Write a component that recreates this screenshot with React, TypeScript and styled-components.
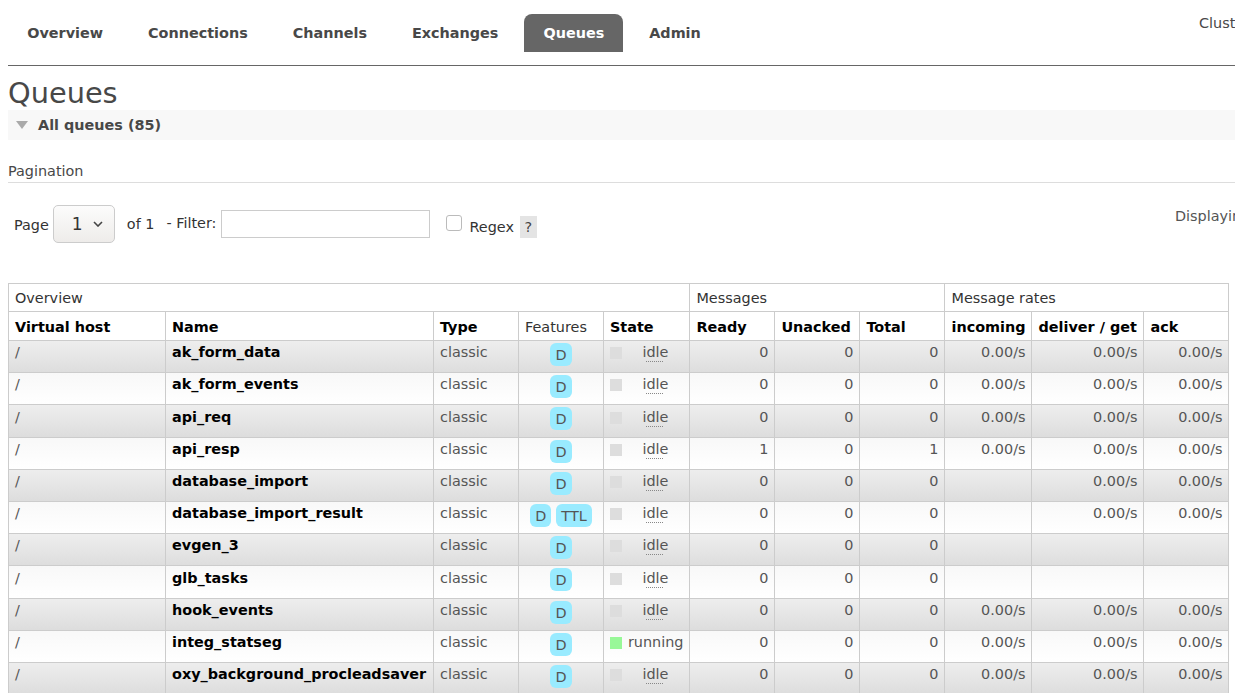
import styled, { createGlobalStyle } from "styled-components";

const GlobalStyle = createGlobalStyle`
    html, body {
        margin: 0;
        padding: 0;
        background: #fff;
        overflow: hidden;
    }
    body {
        font-family: "DejaVu Sans", sans-serif;
        font-size: 14.4px;
        color: #444;
    }
`;

const Page = styled.div`
    width: 1235px;
    height: 693px;
    overflow: hidden;
    padding-left: 8px;
    box-sizing: border-box;
`;

const Header = styled.div`
    display: flex;
    justify-content: space-between;
    height: 65px;
    border-bottom: 1px solid #666;
    margin-bottom: 10px;
    white-space: nowrap;
`;

const Nav = styled.nav`
    display: flex;
    align-items: flex-start;
    padding-top: 14px;
    gap: 6.6px;
`;

const Tab = styled.a<{ $active?: boolean }>`
    display: block;
    height: 38px;
    line-height: 38px;
    padding: 0 19.2px;
    font-weight: bold;
    color: ${(p) => (p.$active ? "#fff" : "#484848")};
    background: ${(p) => (p.$active ? "#666" : "transparent")};
    border-radius: 8px 8px 0 0;
`;

const Cluster = styled.div`
    width: 36px;
    overflow: hidden;
    padding-top: 15px;
    color: #484848;
`;

const Title = styled.h1`
    margin: 0;
    font-size: 28.8px;
    line-height: 34px;
    font-weight: normal;
    color: #484848;
`;

const SectionBar = styled.div`
    display: flex;
    align-items: center;
    gap: 10px;
    height: 30px;
    padding: 0 0 0 8px;
    background: #f8f8f8;
    font-weight: bold;
    color: #484848;
`;

const Triangle = styled.span`
    width: 0;
    height: 0;
    border-left: 6px solid transparent;
    border-right: 6px solid transparent;
    border-top: 8px solid #aaa;
`;

const SubHeading = styled.h3`
    margin: 22px 0 0;
    height: 20px;
    line-height: 19px;
    font-size: 14.4px;
    font-weight: normal;
    color: #484848;
    border-bottom: 1px solid #ddd;
`;

const PagerRow = styled.div`
    display: flex;
    align-items: center;
    justify-content: space-between;
    height: 82px;
    margin-bottom: 18px;
    padding-left: 6px;
    white-space: nowrap;
    color: #333;
`;

const PagerLeft = styled.div`
    display: flex;
    align-items: center;
`;

const PageLabel = styled.span`
    margin-top: 1px;
`;

const PageSelect = styled.div`
    display: flex;
    align-items: center;
    justify-content: space-between;
    box-sizing: border-box;
    width: 62px;
    height: 38px;
    margin: 0 12px 0 4px;
    padding: 0 11px 0 18px;
    border: 1px solid #ccc;
    border-radius: 5px;
    background: linear-gradient(#fcfcfc, #eeecea);
    font-size: 17px;
    color: #333;
`;

const FilterLabel = styled.span`
    margin: -3px 5px 0 12px;
`;

const FilterInput = styled.input`
    box-sizing: border-box;
    width: 209px;
    height: 28px;
    border: 1px solid #ccc;
    padding: 0;
    background: #fff;
`;

const RegexBox = styled.span`
    box-sizing: border-box;
    width: 16px;
    height: 16px;
    margin: -3px 7px 0 16px;
    border: 1px solid #bbb;
    border-radius: 3px;
`;

const RegexLabel = styled.span`
    margin-top: 5px;
`;

const Help = styled.span`
    width: 17px;
    height: 22px;
    line-height: 22px;
    margin: 5px 0 0 6px;
    text-align: center;
    background: #e4e4e4;
    color: #444;
`;

const Displaying = styled.div`
    width: 60px;
    overflow: hidden;
    margin: -16px 0 0;
    color: #555;
`;

const Table = styled.table`
    table-layout: fixed;
    width: 1221px;
    border-collapse: collapse;
    white-space: nowrap;
`;

// $num marks the message columns, whose labels sit a little further right
const GroupCell = styled.th<{ $num?: boolean }>`
    height: 28px;
    padding: 0 5.6px 0 ${(p) => (p.$num ? "6.4px" : "6px")};
    box-sizing: border-box;
    border: 1px solid #ccc;
    font-weight: normal;
    text-align: left;
    color: #333;
`;

const HeadCell = styled.th<{ $plain?: boolean; $num?: boolean }>`
    height: 29px;
    padding: 1px 5.6px 0 ${(p) => (p.$num ? "6.4px" : "6px")};
    box-sizing: border-box;
    border: 1px solid #ccc;
    text-align: left;
    font-weight: ${(p) => (p.$plain ? "normal" : "bold")};
    color: ${(p) => (p.$plain ? "#333" : "#000")};
`;

const Row = styled.tr<{ $alt: boolean }>`
    background: ${(p) =>
        p.$alt
            ? "linear-gradient(#eeeeee, #dddddd)"
            : "linear-gradient(#f8f8f8, #ffffff)"};
`;

const Cell = styled.td<{ $align?: string }>`
    height: 32.2px;
    padding: 3.2px 5.6px 0 6px;
    box-sizing: border-box;
    border: 1px solid #ccc;
    vertical-align: top;
    line-height: 17px;
    text-align: ${(p) => p.$align || "left"};
    color: #555;
`;

const NameCell = styled(Cell)`
    font-weight: bold;
    color: #000;
`;

const FeatureCell = styled(Cell)`
    padding-top: 2px;
    padding-left: 0;
    padding-right: 0;
    text-align: center;
`;

const Feature = styled.abbr`
    display: inline-block;
    height: 23px;
    line-height: 25px;
    padding: 0 5px;
    margin: 0 2.5px;
    border-radius: 6px;
    background: #99ebff;
    color: #555;
    text-decoration: none;
`;

const StateWrap = styled.div`
    display: flex;
    align-items: flex-start;
    justify-content: space-between;
    padding-top: 3px;
    margin-top: -3px;
`;

const StateDot = styled.span<{ $running: boolean }>`
    width: 12px;
    height: 12px;
    margin-top: 3px;
    background: ${(p) => (p.$running ? "#98f898" : "#ddd")};
`;

const StateText = styled.span<{ $running: boolean }>`
    display: inline-block;
    position: relative;
    color: #555;
    margin-right: ${(p) => (p.$running ? "0" : "15px")};
`;

const Dotted = styled.span`
    position: absolute;
    left: 4px;
    right: 5px;
    bottom: -1px;
    border-bottom: 1px dotted #888;
`;

const widths = [157, 268, 85, 85, 86, 85, 85, 85, 87, 112, 85];

type Queue = {
    name: string;
    ttl?: boolean;
    running?: boolean;
    ready?: number;
    total?: number;
    rates?: number;
};

// rates: how many of the three rate columns are filled, counted from the right
const queues: Queue[] = [
    { name: "ak_form_data", rates: 3 },
    { name: "ak_form_events", rates: 3 },
    { name: "api_req", rates: 3 },
    { name: "api_resp", ready: 1, total: 1, rates: 3 },
    { name: "database_import", rates: 2 },
    { name: "database_import_result", ttl: true, rates: 2 },
    { name: "evgen_3", rates: 0 },
    { name: "glb_tasks", rates: 0 },
    { name: "hook_events", rates: 3 },
    { name: "integ_statseg", running: true, rates: 3 },
    { name: "oxy_background_procleadsaver", rates: 3 },
];

const tabs = ["Overview", "Connections", "Channels", "Exchanges", "Queues", "Admin"];

const App = () => {
    return (
        <Page>
            <GlobalStyle />
            <Header>
                <Nav>
                    {tabs.map((t) => (
                        <Tab key={t} $active={t === "Queues"}>{t}</Tab>
                    ))}
                </Nav>
                <Cluster>Cluster</Cluster>
            </Header>
            <Title>Queues</Title>
            <SectionBar>
                <Triangle />
                All queues (85)
            </SectionBar>
            <SubHeading>Pagination</SubHeading>
            <PagerRow>
                <PagerLeft>
                    <PageLabel>Page</PageLabel>
                    <PageSelect>
                        1
                        <svg width="10" height="6" viewBox="0 0 10 6" fill="none" stroke="#444" strokeWidth="1.6">
                            <path d="M1 1l4 4 4-4" />
                        </svg>
                    </PageSelect>
                    <span>of 1</span>
                    <FilterLabel>- Filter:</FilterLabel>
                    <FilterInput />
                    <RegexBox />
                    <RegexLabel>Regex</RegexLabel>
                    <Help>?</Help>
                </PagerLeft>
                <Displaying>Displaying</Displaying>
            </PagerRow>
            <Table>
                <colgroup>
                    {widths.map((w, i) => (
                        <col key={i} style={{ width: w }} />
                    ))}
                </colgroup>
                <thead>
                    <tr>
                        <GroupCell colSpan={5}>Overview</GroupCell>
                        <GroupCell $num colSpan={3}>Messages</GroupCell>
                        <GroupCell $num colSpan={3}>Message rates</GroupCell>
                    </tr>
                    <tr>
                        <HeadCell>Virtual host</HeadCell>
                        <HeadCell>Name</HeadCell>
                        <HeadCell>Type</HeadCell>
                        <HeadCell $plain>Features</HeadCell>
                        <HeadCell>State</HeadCell>
                        <HeadCell $num>Ready</HeadCell>
                        <HeadCell $num>Unacked</HeadCell>
                        <HeadCell $num>Total</HeadCell>
                        <HeadCell $num>incoming</HeadCell>
                        <HeadCell $num>deliver / get</HeadCell>
                        <HeadCell $num>ack</HeadCell>
                    </tr>
                </thead>
                <tbody>
                    {queues.map((q, i) => (
                        <Row key={q.name} $alt={i % 2 === 0}>
                            <Cell>/</Cell>
                            <NameCell>{q.name}</NameCell>
                            <Cell>classic</Cell>
                            <FeatureCell>
                                <Feature>D</Feature>
                                {q.ttl && <Feature>TTL</Feature>}
                            </FeatureCell>
                            <Cell>
                                <StateWrap>
                                    <StateDot $running={!!q.running} />
                                    <StateText $running={!!q.running}>
                                        {q.running ? "running" : "idle"}
                                        {!q.running && <Dotted />}
                                    </StateText>
                                </StateWrap>
                            </Cell>
                            <Cell $align="right">{q.ready ?? 0}</Cell>
                            <Cell $align="right">0</Cell>
                            <Cell $align="right">{q.total ?? 0}</Cell>
                            <Cell $align="right">{(q.rates ?? 0) >= 3 ? "0.00/s" : ""}</Cell>
                            <Cell $align="right">{(q.rates ?? 0) >= 2 ? "0.00/s" : ""}</Cell>
                            <Cell $align="right">{(q.rates ?? 0) >= 1 ? "0.00/s" : ""}</Cell>
                        </Row>
                    ))}
                </tbody>
            </Table>
        </Page>
    );
};

export default App;
